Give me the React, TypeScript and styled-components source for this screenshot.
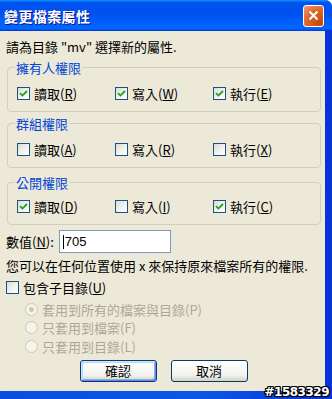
import React from "react";
import styled, { createGlobalStyle } from "styled-components";

const Global = createGlobalStyle`
  html, body { margin: 0; padding: 0; background: #fff; }
  body { width: 332px; height: 399px; overflow: hidden; }
  * { box-sizing: border-box; }
`;

const FONT = `Tahoma, "Noto Sans CJK TC", "Noto Sans CJK SC", "DejaVu Sans", sans-serif`;

const Frame = styled.div`
  position: relative;
  width: 332px;
  height: 399px;
  display: flex;
  flex-direction: column;
  background: linear-gradient(90deg, #0a4ee0 0%, #0b57e8 60%, #0831d9 100%);
  border-top-right-radius: 7px;
  overflow: hidden;
  font-family: ${FONT};
  font-size: 13px;
  color: #000;
`;

const TitleBar = styled.div`
  height: 31px;
  flex: none;
  display: flex;
  align-items: center;
  justify-content: space-between;
  padding: 0 8px 0 4px;
  background: linear-gradient(
    180deg,
    #0997ff,
    #0053ee 8%,
    #0050ee 40%,
    #0066ff 88%,
    #0066ff 93%,
    #005bff 95%,
    #003dd7 96%,
    #003dd7
  );
`;

const Title = styled.span`
  color: #fff;
  font-weight: bold;
  font-size: 14px;
  letter-spacing: 0.4px;
  text-shadow: 1px 1px 0 #0f1089;
`;

const CloseButton = styled.div`
  width: 21px;
  height: 22px;
  border: 1px solid #fff;
  border-radius: 3px;
  background: radial-gradient(
    circle at 90% 90%,
    #cc4600 0%,
    #dc6527 55%,
    #f39877 100%
  );
  display: flex;
  align-items: center;
  justify-content: center;
`;

const Body = styled.div`
  flex: 1;
  margin: 0 7px 8px 0;
  background: #ece9d8;
  padding: 8px 4px 0 6px;
  display: flex;
  flex-direction: column;
`;

const Line = styled.div<{ $mt?: number }>`
  line-height: 15px;
  margin-top: ${(p) => p.$mt ?? 0}px;
  white-space: nowrap;
`;

const Group = styled.fieldset<{ $mt: number; $pt: number }>`
  margin: ${(p) => p.$mt}px 0 0 1px;
  padding: ${(p) => p.$pt}px 0 10px 9px;
  border: 1px solid #d0d0bf;
  border-radius: 4px;
  display: grid;
  grid-template-columns: 98px 98px 1fr;
  min-width: 0;
`;

const Legend = styled.legend`
  color: #0046d5;
  padding: 0 1px;
  margin-left: -2px;
  line-height: 15px;
`;

const CheckItem = styled.label<{ $disabled?: boolean }>`
  display: flex;
  align-items: center;
  gap: 4px;
  line-height: 15px;
  white-space: nowrap;
  color: ${(p) => (p.$disabled ? "#aca899" : "#000")};
`;

const Box = styled.span`
  width: 13px;
  height: 13px;
  flex: none;
  border: 1px solid #1c5180;
  background: linear-gradient(135deg, #dcdcd7 0%, #f4f4f0 60%, #ffffff 100%);
  display: flex;
  align-items: center;
  justify-content: center;
`;

const Radio = styled.span<{ $on?: boolean }>`
  width: 13px;
  height: 13px;
  flex: none;
  border-radius: 50%;
  border: 1px solid #cac8bb;
  background: #f5f4ea;
  display: flex;
  align-items: center;
  justify-content: center;
  &::after {
    content: "";
    width: 5px;
    height: 5px;
    border-radius: 50%;
    background: ${(p) => (p.$on ? "#cac8bb" : "transparent")};
  }
`;

const ValueRow = styled.div`
  display: flex;
  align-items: center;
  gap: 5px;
  margin-top: 5px;
`;

const Input = styled.div`
  width: 112px;
  height: 23px;
  border: 1px solid #7f9db9;
  background: #fff;
  display: flex;
  align-items: center;
  padding-left: 3px;
  font-family: "Liberation Sans", Arial, sans-serif;
  font-size: 13px;
`;

const Caret = styled.span`
  width: 1px;
  height: 14px;
  background: #000;
  margin-right: 1px;
`;

const Sub = styled.div`
  display: flex;
  flex-direction: column;
  margin: 5px 0 0 19px;
`;

const RadioRow = styled(CheckItem)`
  height: 18.5px;
`;

const Buttons = styled.div`
  display: flex;
  justify-content: center;
  gap: 14px;
  margin-top: 4px;
`;

const Button = styled.div<{ $default?: boolean }>`
  width: 77px;
  height: 22px;
  border: 1px solid #003c74;
  border-radius: 3px;
  background: linear-gradient(180deg, #ffffff 0%, #f3f3ef 70%, #d6d0c5 100%);
  display: flex;
  align-items: center;
  justify-content: center;
  box-shadow: ${(p) =>
    p.$default
      ? "inset 1px 1px 0 #cee7ff, inset -1px -1px 0 #6982ee, inset 2px 2px 0 #bcd4f6, inset -2px -2px 0 #89ade4"
      : "none"};
`;

const Watermark = styled.div`
  position: absolute;
  right: 3px;
  bottom: 0px;
  font-family: "DejaVu Sans", sans-serif;
  font-weight: bold;
  font-size: 12px;
  letter-spacing: -0.5px;
  color: #fff;
  text-shadow: 1px 0 0 #000, -1px 0 0 #000, 0 1px 0 #000, 0 -1px 0 #000,
    1px 1px 0 #000, -1px -1px 0 #000, 1px -1px 0 #000, -1px 1px 0 #000;
`;

const Check = () => (
  <svg width="9" height="9" viewBox="0 0 9 9">
    <path d="M1 4.2 L3.4 6.6 L8 2" stroke="#21a121" strokeWidth="1.8" fill="none" />
  </svg>
);

const CB = ({ on, children }: { on?: boolean; children: React.ReactNode }) => (
  <CheckItem>
    <Box>{on && <Check />}</Box>
    <span>{children}</span>
  </CheckItem>
);

const groups = [
  {
    title: "擁有人權限",
    mt: 6,
    pt: 11,
    items: [
      { t: "讀取", k: "R", on: true },
      { t: "寫入", k: "W", on: true },
      { t: "執行", k: "E", on: true },
    ],
  },
  {
    title: "群組權限",
    mt: 4,
    pt: 11,
    items: [
      { t: "讀取", k: "A", on: false },
      { t: "寫入", k: "R", on: false },
      { t: "執行", k: "X", on: false },
    ],
  },
  {
    title: "公開權限",
    mt: 7,
    pt: 9,
    items: [
      { t: "讀取", k: "D", on: true },
      { t: "寫入", k: "I", on: false },
      { t: "執行", k: "C", on: true },
    ],
  },
];

export default function App() {
  return (
    <>
      <Global />
      <Frame>
        <TitleBar>
          <Title>變更檔案屬性</Title>
          <CloseButton>
            <svg width="11" height="11" viewBox="0 0 11 11">
              <path d="M1.5 1.5 L9.5 9.5 M9.5 1.5 L1.5 9.5" stroke="#fff" strokeWidth="2" />
            </svg>
          </CloseButton>
        </TitleBar>
        <Body>
          <Line>請為目錄 "mv" 選擇新的屬性.</Line>
          {groups.map((g) => (
            <Group key={g.title} $mt={g.mt} $pt={g.pt}>
              <Legend>{g.title}</Legend>
              {g.items.map((it) => (
                <CB key={it.t} on={it.on}>
                  {it.t}(<u>{it.k}</u>)
                </CB>
              ))}
            </Group>
          ))}
          <ValueRow>
            <span>
              數值(<u>N</u>):
            </span>
            <Input>
              <Caret />
              705
            </Input>
          </ValueRow>
          <Line $mt={5}>您可以在任何位置使用 x 來保持原來檔案所有的權限.</Line>
          <Line $mt={7}>
            <CB>
              包含子目錄(<u>U</u>)
            </CB>
          </Line>
          <Sub>
            <RadioRow $disabled>
              <Radio $on />
              <span>套用到所有的檔案與目錄(P)</span>
            </RadioRow>
            <RadioRow $disabled>
              <Radio />
              <span>只套用到檔案(F)</span>
            </RadioRow>
            <RadioRow $disabled>
              <Radio />
              <span>只套用到目錄(L)</span>
            </RadioRow>
          </Sub>
          <Buttons>
            <Button $default>確認</Button>
            <Button>取消</Button>
          </Buttons>
        </Body>
        <Watermark>#1583329</Watermark>
      </Frame>
    </>
  );
}
